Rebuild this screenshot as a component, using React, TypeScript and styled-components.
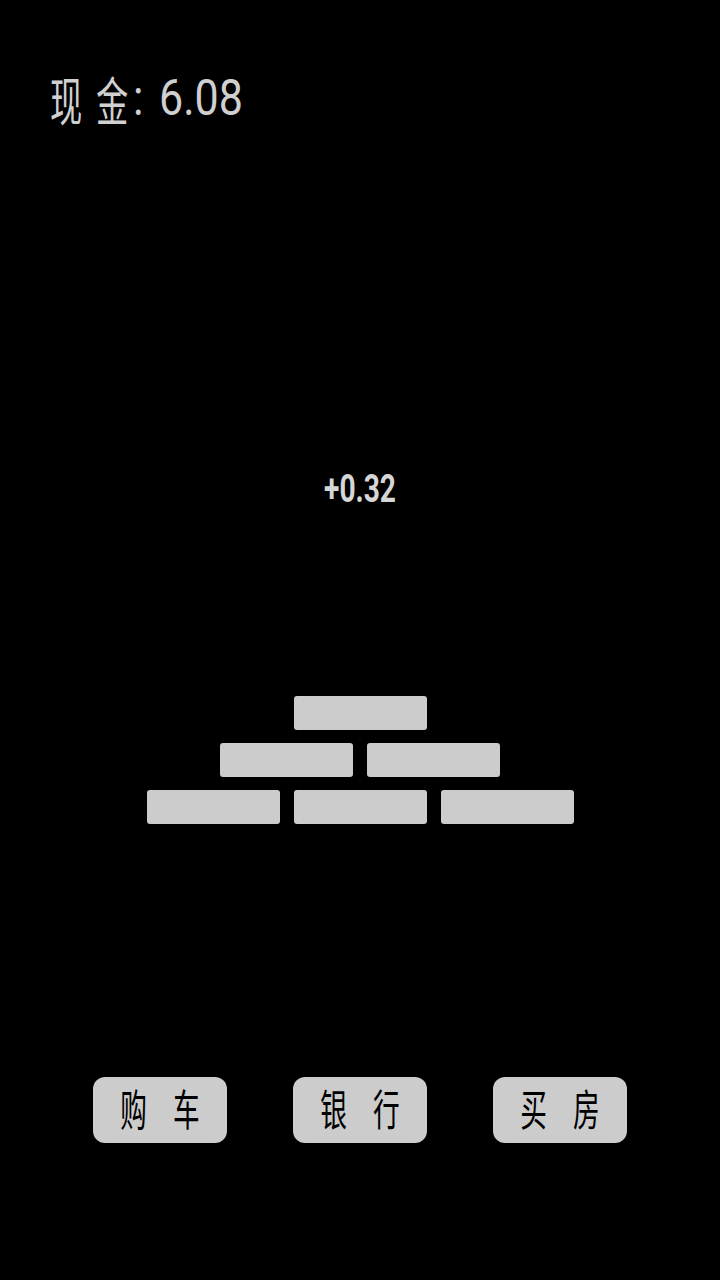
import React from "react";
import styled, { createGlobalStyle } from "styled-components";

const GlobalStyle = createGlobalStyle`
  html, body { margin: 0; padding: 0; background: #000; }
  #root { width: 720px; height: 1280px; }
`;

const Page = styled.div`
  width: 720px;
  height: 1280px;
  background: #000;
  display: flex;
  flex-direction: column;
  overflow: hidden;
`;

const Header = styled.div`
  height: 150px;
  padding: 72px 0 0 50px;
  box-sizing: border-box;
`;

const TitleRow = styled.div`
  height: 60px;
  display: flex;
  align-items: flex-end;
  color: #d0d0d0;
`;

const Slot = styled.span<{ $w: number; $drop?: number }>`
  display: block;
  width: ${(p) => p.$w}px;
  margin-bottom: ${(p) => p.$drop ?? 0}px;
  white-space: nowrap;
`;

const CjkGlyph = styled.span`
  display: block;
  font-family: "Noto Sans CJK SC", sans-serif;
  font-size: 52px;
  line-height: 52px;
  transform: scaleX(0.62);
  transform-origin: left center;
`;

const DigitGlyph = styled.span`
  display: block;
  font-family: "Roboto", sans-serif;
  font-size: 50px;
  line-height: 50px;
  transform: scaleX(0.86);
  transform-origin: left center;
`;

const Gain = styled.div`
  margin-top: 320px;
  text-align: center;
  color: #d6d6d6;
  font-family: "Roboto", sans-serif;
  font-weight: 700;
  font-size: 38px;
  line-height: 1;
  transform: scaleX(0.74);
`;

const Pyramid = styled.div`
  margin-top: 188px;
  display: flex;
  flex-direction: column;
  align-items: center;
  gap: 13px;
`;

const BrickRow = styled.div`
  display: flex;
  gap: 14px;
`;

const Brick = styled.div`
  width: 133px;
  height: 34px;
  border-radius: 3px;
  background: #cccccc;
`;

const ButtonRow = styled.div`
  margin-top: 253px;
  display: flex;
  justify-content: center;
  gap: 66px;
`;

const ActionButton = styled.button`
  width: 134px;
  height: 66px;
  border: none;
  border-radius: 12px;
  background: #cccccc;
  padding: 0 0 5px;
  box-sizing: border-box;
  display: flex;
  align-items: center;
  justify-content: center;
  cursor: pointer;
`;

const ButtonLabel = styled.span`
  display: flex;
  gap: 42px;
  color: #000;
  font-family: "Noto Sans CJK SC", sans-serif;
  font-weight: 400;
  font-size: 43px;
  line-height: 1;
  transform: scaleX(0.62);
`;

const rows = [1, 2, 3];
const actions = [
  ["购", "车"],
  ["银", "行"],
  ["买", "房"],
];

export default function App() {
  return (
    <>
      <GlobalStyle />
      <Page>
        <Header>
          <TitleRow>
            <Slot $w={46} $drop={7}>
              <CjkGlyph>现</CjkGlyph>
            </Slot>
            <Slot $w={37} $drop={7}>
              <CjkGlyph>金</CjkGlyph>
            </Slot>
            <Slot $w={26} $drop={9}>
              <DigitGlyph>:</DigitGlyph>
            </Slot>
            <Slot $w={90} $drop={9}>
              <DigitGlyph>6.08</DigitGlyph>
            </Slot>
          </TitleRow>
        </Header>
        <Gain>+0.32</Gain>
        <Pyramid>
          {rows.map((n) => (
            <BrickRow key={n}>
              {Array.from({ length: n }).map((_, i) => (
                <Brick key={i} />
              ))}
            </BrickRow>
          ))}
        </Pyramid>
        <ButtonRow>
          {actions.map((chars) => (
            <ActionButton key={chars.join("")}>
              <ButtonLabel>
                {chars.map((c) => (
                  <span key={c}>{c}</span>
                ))}
              </ButtonLabel>
            </ActionButton>
          ))}
        </ButtonRow>
      </Page>
    </>
  );
}
